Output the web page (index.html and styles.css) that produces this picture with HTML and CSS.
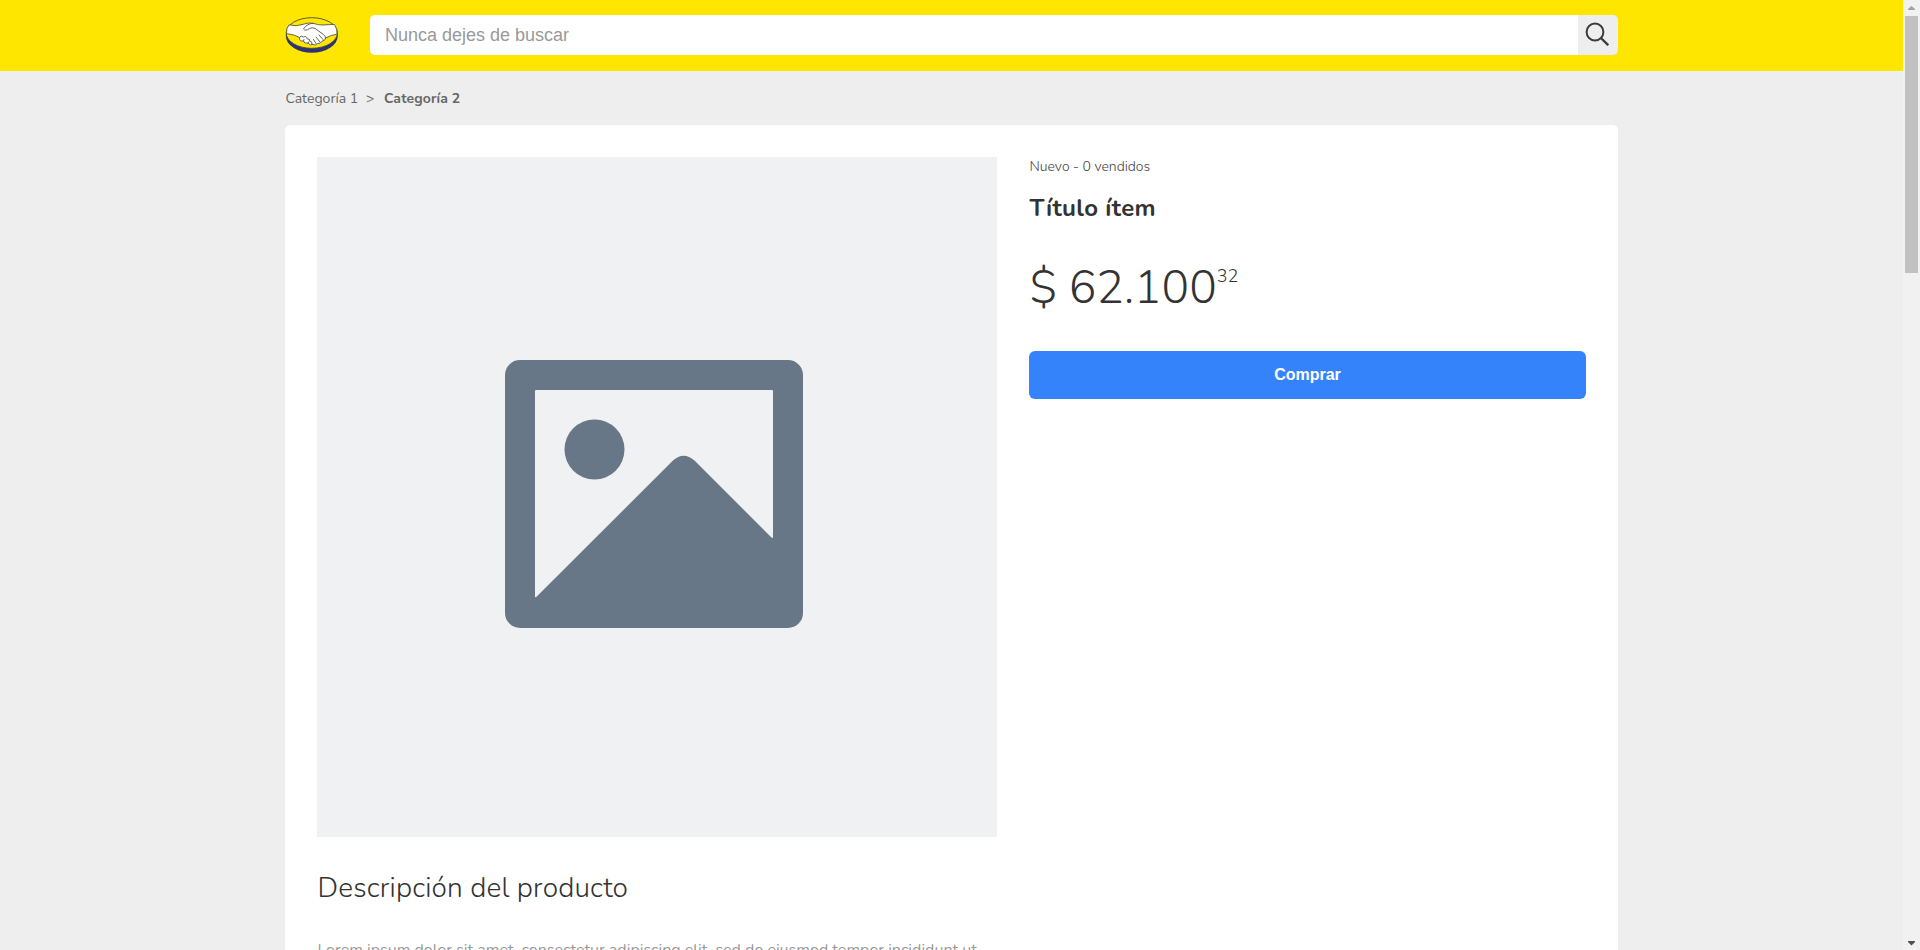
FILE: index.html
```html
<!DOCTYPE html>
<html lang="es">
<head>
<meta charset="utf-8">
<title>Título ítem</title>
<link rel="stylesheet" href="styles.css">
</head>
<body>
<div class="window">
  <div class="page">
    <header class="header">
      <div class="container header-inner">
        <a class="logo">
          <svg width="54" height="38" viewBox="0 0 54 38">
            <ellipse cx="26.800" cy="19.600" rx="26" ry="17.2" fill="#2d3277"/>
            <ellipse cx="26.800" cy="17" rx="25.6" ry="15.3" fill="#ffe600" stroke="#4b4a3c" stroke-width=".9"/>
            <path d="M4 8.8 Q11 11 18 8.3 Q23 6.300 28 7.300 Q34 9.300 38 9 Q44 8.500 49.500 8.500 Q52.500 13 52 18.200 Q46 19 41 21.800 Q40 25 37 25.200 Q35.500 28 32.500 27.500 Q30.500 30 28 28.400 Q25 30 23 27 Q19 28 18.500 25 Q14 25.500 14.500 21.500 Q11 19 1.500 17.500 Q1 12.500 4 8.800Z" fill="#fff" stroke="#55554a" stroke-width=".9"/>
            <path d="M28 7.300 Q22 7.500 18.500 13 Q20 15.500 24.500 12.600 Q27 11 30 12.400 L38.500 18.500 Q41 20.500 40.500 22 M34 19 L38 23.500 M31 21 L35 26 M28.500 23.500 L31 27.500 M14.500 21.500 Q16 18.500 18.500 21 Q21.500 19.500 22 22.800 Q25 22.500 24.800 25 Q27.500 25.300 27 28 M18.500 25 L19 23.500 M23 27 L24 25.500" fill="none" stroke="#55554a" stroke-width=".9" stroke-linecap="round"/>
          </svg>
        </a>
        <form class="search">
          <input class="search-input" type="text" placeholder="Nunca dejes de buscar">
          <button class="search-button" type="button">
            <svg width="24" height="24" viewBox="0 0 24 24" fill="none" stroke="#3c3c3c"><circle cx="10" cy="10" r="8.400" stroke-width="2"/><path d="M15.900 16 L23.200 23.200" stroke-width="2.400"/></svg>
          </button>
        </form>
      </div>
    </header>
    <nav class="container breadcrumb"><span class="crumb">Categoría 1</span><span class="separator">&gt;</span><b class="crumb-current">Categoría 2</b></nav>
    <main class="container card">
      <div class="product">
        <div class="picture">
          <svg width="298" height="268" viewBox="0 0 298 268">
            <path fill="#687787" fill-rule="evenodd" d="M15 0H283A15 15 0 0 1 298 15V253A15 15 0 0 1 283 268H15A15 15 0 0 1 0 253V15A15 15 0 0 1 15 0ZM31 30Q30 30 30 31V236.500Q30 238 31.500 236.800L168 100.500Q178.500 91 189.500 100.500L266.500 177.500Q268 178.500 268 177V31Q268 30 267 30Z"/>
            <circle cx="89.500" cy="89.500" r="30" fill="#687787"/>
          </svg>
        </div>
        <section class="info">
          <p class="condition">Nuevo - 0 vendidos</p>
          <h1 class="title">Título ítem</h1>
          <p class="price"><span class="amount">$ 62.100</span><span class="cents">32</span></p>
          <button class="buy" type="button">Comprar</button>
        </section>
      </div>
      <section class="description">
        <h2 class="description-title">Descripción del producto</h2>
        <p class="description-text">Lorem ipsum dolor sit amet, consectetur adipiscing elit, sed do eiusmod tempor incididunt ut</p>
      </section>
    </main>
  </div>
  <div class="scrollbar">
    <svg class="arrow" width="17" height="16" viewBox="0 0 17 16"><path d="M5 10H12V9L8.500 6L5 9Z" fill="#a3a3a3"/></svg>
    <div class="thumb"></div>
    <svg class="arrow arrow-down" width="17" height="16" viewBox="0 0 17 16"><path d="M5 7H12V8L8.500 11.500L5 8Z" fill="#505050"/></svg>
  </div>
</div>
</body>
</html>
```
FILE: styles.css
```css
* { box-sizing: border-box; }
body { margin: 0; font-family: "Nunito", Lato, sans-serif; color: #333; background: #eee; }
p, h1, h2 { margin: 0; white-space: nowrap; }
.window { display: flex; height: 950px; overflow: hidden; }
.page { flex: 1; min-width: 0; }
.container { width: 1333px; margin: 0 auto; }
.header { height: 71px; padding-top: 15px; background: #ffe600; }
.header-inner { display: flex; }
.logo { width: 85px; height: 40px; padding-top: 1px; }
.search { display: flex; flex: 1; height: 40px; border-radius: 5px; overflow: hidden; }
.search-input { flex: 1; min-width: 0; border: 0; padding: 0 15px; background: #fff; font: 18px "Liberation Sans", Arial, sans-serif; }
.search-input::placeholder { color: #999; opacity: 1; }
.search-button { display: flex; width: 40px; padding: 7px 0 0 7px; border: 0; background: #eee; align-items: flex-start; }
.breadcrumb { display: flex; height: 54px; padding-top: 18px; font-size: 14px; line-height: 20px; color: #666; }
.crumb { width: 81px; padding-left: .5px; }
.separator { width: 18px; }
.crumb-current { letter-spacing: .1px; }
.card { height: 900px; padding: 32px; border-radius: 5px 5px 0 0; background: #fff; }
.product { display: flex; gap: 32px; }
.picture { display: flex; width: 680px; height: 680px; align-items: center; justify-content: center; padding: 0 6px 7px 0; background: #eff1f3; }
.info { flex: 1; }
.condition { height: 20px; padding-left: .5px; font-size: 14px; font-weight: 300; line-height: 20px; color: #444; }
.title { margin-top: 15px; padding-left: .5px; font-size: 24px; line-height: 32px; letter-spacing: .35px; }
.price { display: flex; height: 66px; margin-top: 31px; padding-left: .5px; }
.amount { font-size: 46px; font-weight: 330; line-height: 66px; }
.cents { font-size: 18px; line-height: 42px; font-weight: 300; }
.buy { display: block; width: 557px; height: 48px; margin-top: 30px; border: 0; border-radius: 6px; background: #3483fa; color: #fff; font: bold 16px "Liberation Sans", Arial, sans-serif; }
.description-title { margin-top: 32px; padding-left: .5px; font-size: 28px; font-weight: 330; line-height: 38px; letter-spacing: .18px; }
.description-text { margin-top: 32px; padding-left: .5px; width: 680px; font-size: 16px; line-height: 22px; color: #999; }
.scrollbar { display: flex; flex-direction: column; width: 17px; background: #f1f1f1; }
.arrow { display: block; }
.thumb { width: 13px; height: 257px; margin-left: 2px; background: #c1c1c1; }
.arrow-down { margin-top: auto; }
```
